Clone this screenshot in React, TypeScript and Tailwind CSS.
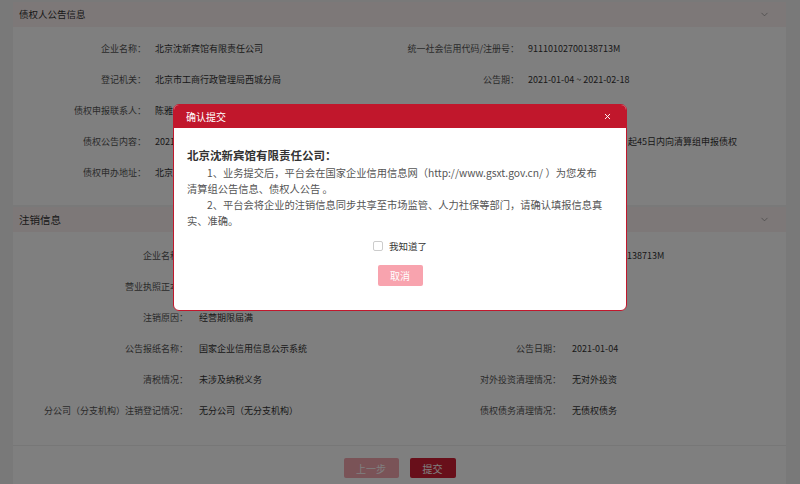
import { ChevronDown, X } from 'lucide-react';

type Field = { label: string; value: string };
type InfoRowData = { left: Field; right?: Field; wide?: boolean };

const NOTICE_ROWS: InfoRowData[] = [
  {
    left: { label: '企业名称：', value: '北京沈新宾馆有限责任公司' },
    right: { label: '统一社会信用代码/注册号：', value: '91110102700138713M' },
  },
  {
    left: { label: '登记机关：', value: '北京市工商行政管理局西城分局' },
    right: { label: '公告期：', value: '2021-01-04 ~ 2021-02-18' },
  },
  {
    left: { label: '债权申报联系人：', value: '陈雅' },
    right: { label: '联系电话：', value: '13800000000' },
  },
  {
    left: {
      label: '债权公告内容：',
      value:
        '2021年01月04日，北京沈新宾馆有限责任公司决定注销，请债权人自接到通知书日起30日内，未接到通知书的自公告日起45日内向清算组申报债权',
    },
    wide: true,
  },
  {
    left: { label: '债权申办地址：', value: '北京市西城区' },
  },
];

const CANCEL_ROWS: InfoRowData[] = [
  {
    left: { label: '企业名称：', value: '北京沈新宾馆有限责任公司' },
    right: { label: '统一社会信用代码/注册号：', value: '91110102700138713M' },
  },
  {
    left: { label: '营业执照正本：', value: '已缴回' },
    right: { label: '营业执照副本：', value: '已缴回' },
  },
  {
    left: { label: '注销原因：', value: '经营期限届满' },
  },
  {
    left: { label: '公告报纸名称：', value: '国家企业信用信息公示系统' },
    right: { label: '公告日期：', value: '2021-01-04' },
  },
  {
    left: { label: '清税情况：', value: '未涉及纳税义务' },
    right: { label: '对外投资清理情况：', value: '无对外投资' },
  },
  {
    left: { label: '分公司（分支机构）注销登记情况：', value: '无分公司（无分支机构）' },
    right: { label: '债权债务清理情况：', value: '无债权债务' },
  },
];

function Cell({ field, labelClass }: { field: Field; labelClass: string }) {
  return (
    <div className="flex w-[373px] items-center">
      <span className={`shrink-0 text-right text-[#555] ${labelClass}`}>{field.label}</span>
      <span className="whitespace-nowrap text-[#333]">{field.value}</span>
    </div>
  );
}

function SectionHeader({ title, size }: { title: string; size: string }) {
  return (
    <div className="flex h-[25px] items-center justify-between bg-[#fbf1f1] pl-[6px] pr-[16px]">
      <span className={`text-[#333] ${size}`}>{title}</span>
      <ChevronDown size={11} strokeWidth={1.5} className="text-[#888]" />
    </div>
  );
}

export default function App() {
  return (
    <div className="relative h-[484px] w-[800px] overflow-hidden bg-[#f2f2f2] font-['Noto_Sans_CJK_SC',sans-serif] text-[9px]">
      <div className="ml-[13px] w-[773px] pt-[2px]">
        <section className="bg-white">
          <SectionHeader title="债权人公告信息" size="text-[9.5px]" />
          <div className="pb-[17px] pt-[6px]">
            {NOTICE_ROWS.map((row) => (
              <div key={row.left.label} className="flex h-[31px] items-center">
                {row.wide ? (
                  <div className="flex items-center">
                    <span className="w-[142px] shrink-0 pr-[9px] text-right text-[#555]">{row.left.label}</span>
                    <span className="whitespace-nowrap text-[#333]">{row.left.value}</span>
                  </div>
                ) : (
                  <>
                    <Cell field={row.left} labelClass="w-[142px] pr-[9px]" />
                    {row.right && <Cell field={row.right} labelClass="w-[142px] pr-[9px]" />}
                  </>
                )}
              </div>
            ))}
          </div>
        </section>

        <section className="mt-[2px] bg-white">
          <SectionHeader title="注销信息" size="text-[10.5px]" />
          <div className="pb-[19px] pt-[8px]">
            {CANCEL_ROWS.map((row) => (
              <div key={row.left.label} className="flex h-[31px] items-center">
                <Cell field={row.left} labelClass="w-[186px] pr-[11px]" />
                {row.right && <Cell field={row.right} labelClass="w-[186px] pr-[11px]" />}
              </div>
            ))}
          </div>
        </section>

        <div className="flex h-[40px] justify-center gap-[11px] border-t border-[#eee] bg-white pt-[12px]">
          <button
            type="button"
            className="h-[20px] w-[55px] rounded-[2px] bg-[#f4a6ae] text-[10px] text-white"
          >
            上一步
          </button>
          <button
            type="button"
            className="h-[20px] w-[46px] rounded-[2px] bg-[#d01f35] text-[10px] text-white"
          >
            提交
          </button>
        </div>
      </div>

      <div className="absolute inset-0 bg-black/50" />

      <div className="absolute left-[173px] top-[104px] h-[207px] w-[454px] overflow-hidden rounded-[6px] border-[1.5px] border-[#c1172c] bg-white">
        <div className="flex h-[23px] items-center justify-between bg-[#c1172c] pl-[12px] pr-[14px] text-[10px] text-white">
          <span>确认提交</span>
          <X size={9} strokeWidth={2.5} />
        </div>
        <div className="px-[13px] pt-[19px]">
          <p className="text-[11.5px] font-bold leading-[16px] text-[#333]">北京沈新宾馆有限责任公司：</p>
          <div className="mt-[2px] w-[420px] text-[10.25px] leading-[16px] text-[#555]">
            <p className="indent-[20px]">
              1、业务提交后，平台会在国家企业信用信息网（http://www.gsxt.gov.cn/ ）为您发布
              <br />
              清算组公告信息、债权人公告 。
            </p>
            <p className="indent-[20px]">
              2、平台会将企业的注销信息同步共享至市场监管、人力社保等部门，请确认填报信息真实、准确。
            </p>
          </div>
          <label className="mt-[10px] flex h-[14px] items-center justify-center gap-[6px] text-[9.5px] text-[#333]">
            <span className="h-[10px] w-[10px] rounded-[2px] border border-[#ccc] bg-white" />
            我知道了
          </label>
          <div className="mt-[12px] flex justify-center">
            <button
              type="button"
              className="h-[21px] w-[45px] rounded-[2px] bg-[#f8a3ae] text-[10px] text-white"
            >
              取消
            </button>
          </div>
        </div>
      </div>
    </div>
  );
}
